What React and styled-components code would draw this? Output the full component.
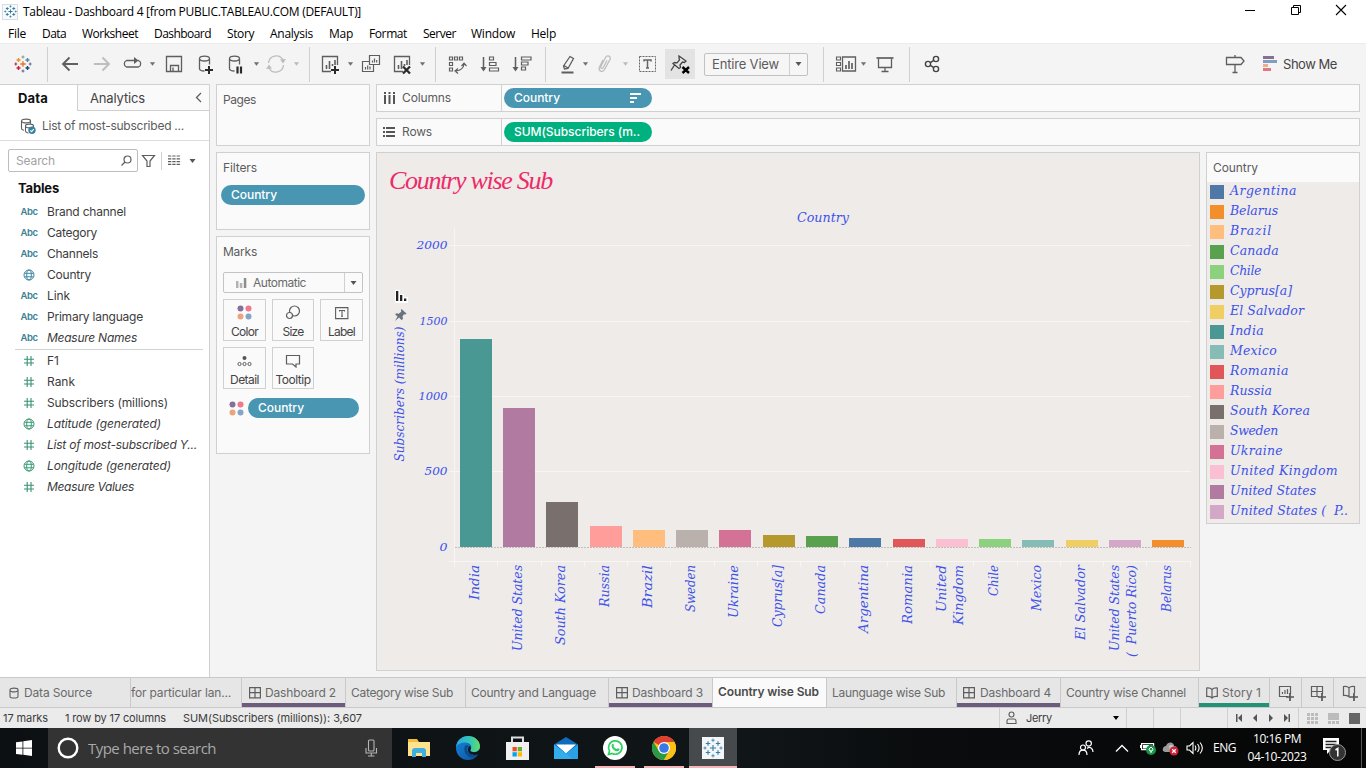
import React, { useLayoutEffect, useRef } from "react";
import styled, { createGlobalStyle, css } from "styled-components";

const UI = `"Inter", "Liberation Sans", sans-serif`;
const WIN = `"Open Sans", "Noto Sans", sans-serif`;
const SCRIPT = `"Lucida Calligraphy", "DejaVu Serif", serif`;
const TITLE = `"Liberation Serif", serif`;

const Global = createGlobalStyle`
  * { box-sizing: border-box; }
  body { margin: 0; background: #f4f4f4; font-family: ${UI}; }
  svg { display: block; flex: none; }
`;

/* ---------- text that tracks out to a given width ---------- */
const Run = styled.span`
  display: inline-block;
  white-space: pre;
  flex: none;
  font-style: ${(p) => (p.$italic ? "italic" : "inherit")};
`;
function Fit({ w, children, italic }) {
  const ref = useRef(null);
  useLayoutEffect(() => {
    const el = ref.current;
    el.style.letterSpacing = "0px";
    const natural = el.getBoundingClientRect().width;
    el.style.letterSpacing = `${(w - natural) / String(children).length}px`;
  }, [w, children]);
  return <Run ref={ref} $italic={italic}>{children}</Run>;
}

/* ---------- icons ---------- */
const Icon = ({ w = 24, h = 24, c = "#5e5e5e", sw = 1.3, children, ...rest }) => (
  <svg width={w} height={h} viewBox={`0 0 ${w} ${h}`} fill="none" stroke={c} strokeWidth={sw} {...rest}>
    {children}
  </svg>
);
const plus = (x, y, r) => `M${x - r} ${y}H${x + r}M${x} ${y - r}V${y + r}`;
const LOGO_COLORS = ["#e8762c", "#c72035", "#5b879b", "#5c6692", "#eb912c", "#1f457e", "#7199a6", "#c72035", "#5b879b"];
const LOGO_BLUE = Array(9).fill("#3a7ba0");
const TableauMark = ({ size, colors = LOGO_COLORS, sw = 1.4 }) => (
  <svg width={size} height={size} viewBox="0 0 18 18" fill="none" strokeWidth={sw}>
    <path stroke={colors[0]} d={plus(9, 9, 2.8)} />
    <path stroke={colors[4]} d={plus(4.5, 5, 2)} />
    <path stroke={colors[2]} d={plus(13.5, 5, 2)} />
    <path stroke={colors[1]} d={plus(4.5, 13, 2)} />
    <path stroke={colors[5]} d={plus(13.5, 13, 2)} />
    <g strokeWidth={sw * 0.75}>
      <path stroke={colors[6]} d={plus(9, 2, 1.5)} />
      <path stroke={colors[3]} d={plus(9, 16, 1.5)} />
      <path stroke={colors[7]} d={plus(1.8, 9, 1.4)} />
      <path stroke={colors[3]} d={plus(16.2, 9, 1.4)} />
    </g>
  </svg>
);
const Caret = ({ w = 7, c = "#707070" }) => (
  <svg width={w} height="6" viewBox="0 0 8 6"><path fill={c} d="M1 1h6L4 5z" /></svg>
);
const DARK = "#2b2b2b";
const BackIcon = () => <Icon sw={1.9} c="#606060"><path d="M20 12H5M11.500 5.500 5 12l6.500 6.500" /></Icon>;
const ForwardIcon = () => <Icon sw={1.9} c="#bdbdbd"><path d="M4 12h15M12.500 5.500 19 12l-6.500 6.500" /></Icon>;
const ReplayIcon = () => (
  <Icon><path d="M18 8.500h.5a3.500 3.500 0 0 1 0 6.500h-12a3.500 3.500 0 0 1 0-6.500h9" /><path fill="#5e5e5e" stroke="none" d="m14 5 4.500 3.500L14 12z" /></Icon>
);
const SaveIcon = () => <Icon><path d="M4.500 4.500h15v15h-15z M8.500 19v-5.500h8V19M11 19v-3.500" /></Icon>;
const Cylinder = () => <path d="M5.500 6.500v10c0 1.500 2 2.500 5 2.500M15.500 6.500v6M5.500 6.500c0-3.300 10-3.300 10 0s-10 3.300-10 0Z" />;
const DbPlusIcon = () => <Icon><Cylinder /><path stroke={DARK} strokeWidth="2" d={plus(15, 18, 4)} /></Icon>;
const DbPauseIcon = () => <Icon><Cylinder /><path stroke={DARK} strokeWidth="2.200" d="M13.500 14.500v7M17 14.500v7" /></Icon>;
const RefreshIcon = () => (
  <Icon c="#bdbdbd"><path d="M4.500 11a7.700 7.700 0 0 1 14.500-3M19.500 13A7.700 7.700 0 0 1 5 16" /><path fill="#bdbdbd" stroke="none" d="m16 7.500 6-.5-3 4.500zM8 16.500l-6 .5 3-4.500z" /></Icon>
);
const SheetIcon = ({ mark }) => (
  <Icon>
    <path d="M13 19.500H4.500v-15h15V13" /><path strokeWidth="1.600" d="M8.500 17v-4M11.500 17V9M14.500 14v-2M17 13V8" />
    {mark === "plus" && <path stroke={DARK} strokeWidth="2" d={plus(17, 18, 4)} />}
    {mark === "x" && <path stroke={DARK} strokeWidth="2.300" d="m13 14.500 7 7M20 14.500l-7 7" />}
  </Icon>
);
const DuplicateIcon = () => (
  <Icon sw={1.2}><path d="M10.500 3.500h10v9h-10zM10 9.500H3.500v10h11V13M13.500 10.500v-2M15.500 10.500v-4M17.700 10.500V8M6.500 17.500v-2.500M8.700 17.500v-4M11 17.500v-3" /></Icon>
);
const SwapIcon = () => (
  <Icon sw={1.2}><path d="M4.500 5h3v3h-3zM9.500 5h3v3h-3zM14.500 5h3v3h-3zM4.500 10.500h3v3h-3zM4.500 16h3v3h-3zM19 12c-.5 4-3 6.500-8 7M16.500 14l2.500-2.800L21.500 14M13 16.500 10 19l3 2.500" /></Icon>
);
const SortIcon = ({ asc }) => (
  <Icon sw={1.2}>
    <path strokeWidth="1.500" d="M5.500 5v13" /><path fill="#5e5e5e" stroke="none" d="M2.500 15h6l-3 4.500z" />
    <path d={asc ? "M11.500 5h4v3h-4zM11.500 10.500h6.500v3h-6.500zM11.500 16h9v3h-9z" : "M11.500 5h9.500v3h-9.500zM11.500 10h6.500v3h-6.500zM11.500 15h4v3h-4z"} />
  </Icon>
);
const HighlighterIcon = () => (
  <Icon><path d="m14 4.500 3.500 2-5.500 10-3.500.5-1-3z M8 13.500l4 2.500" /><path strokeWidth="2" d="M5.500 20.500h12" /></Icon>
);
const ClipIcon = () => (
  <Icon c="#bdbdbd"><path d="m10 8-3.500 7c-1.800 4 3 6 5 2.500l5.500-10c1.500-3.500-2.800-5-4.500-2L7.800 14.500c-.6 2 1.700 2.500 2.500 1L14 8.500" /></Icon>
);
const TextBoxIcon = () => (
  <Icon c="#666"><rect x="4.500" y="4.500" width="16" height="15" strokeDasharray="2 1" strokeWidth="1" /><path strokeWidth="1.500" d="M9 9.500V8h7v1.500M12.500 8v8M11 16h3" /></Icon>
);
const PinXIcon = () => (
  <Icon w={30} h={30} c="#444"><path d="m14 7 7 5-1.500 1.500-2-.5-2.500 3 .5 2.500-1.500 1-6-5 1.500-1 2.500.3 2.500-3-.5-2zM9.500 16 6 21.500" /><path stroke="#000" strokeWidth="2.400" d="m17.500 18 6.500 6M24 18l-6.500 6" /></Icon>
);
const CardsIcon = () => (
  <Icon><path strokeWidth="1.100" d="M2.500 5h4v3h-4zM2.500 10.500h4v3h-4zM2.500 16h4v3h-4z" /><path d="M8.500 5h13v14h-13z" /><path strokeWidth="1.700" d="M12 17v-4M15 17V9M18 17v-6" /></Icon>
);
const PresentIcon = () => <Icon><path strokeWidth="1.700" d="M3.500 6h17" /><path d="M5.500 6.500v9h13v-9M12 15.500V20M8.500 19.500h7" /></Icon>;
const ShareIcon = () => (
  <Icon c="#444" sw={1.4}><circle cx="8" cy="12" r="2.600" /><circle cx="16" cy="7" r="2.600" /><circle cx="16" cy="17" r="2.600" /><path d="m10.300 10.700 3.500-2.300M10.300 13.300l3.500 2.300" /></Icon>
);
const SignpostIcon = () => <Icon><path d="M3.500 5.500H18l3 3.500-3 3.500H3.500zM12 3v2.500M12 12.500v8M9.500 20.500h5" /></Icon>;
const ShowMeIcon = () => (
  <svg width="14" height="16"><path fill="#86708f" d="M0 0h11v3H0z" /><path fill="#7f9fc0" d="M0 4h14v3H0z" /><path fill="#ecae8d" d="M0 8h5v3H0z" /><path fill="#e27783" d="M0 12h8v3H0z" /></svg>
);
const GlobeIcon = ({ c }) => (
  <Icon w={12} h={12} c={c} sw={1}><circle cx="6" cy="6" r="5" /><ellipse cx="6" cy="6" rx="2.300" ry="5" /><path d="M1.500 4.300h9M1.500 7.800h9" /></Icon>
);
const HashIcon = () => <Icon w={12} h={12} c="#3a9273" sw={1.1}><path d="M4.200 1v10M8 1v10M1 4.200h10M1 8h10" /></Icon>;
const Dots = ({ size = 15 }) => (
  <svg width={size} height={size} viewBox="0 0 15 15"><circle cx="3.500" cy="3.500" r="3" fill="#84709a" /><circle cx="11.500" cy="3.500" r="3" fill="#f0788a" /><circle cx="3.500" cy="11.500" r="3" fill="#eca47e" /><circle cx="11.500" cy="11.500" r="3" fill="#86a4c6" /></svg>
);
const WindowIcon = () => <Icon w={12} h={12} sw={1.2}><path d="M.600.600h10.800v10.300H.600zM6 .500v10.500M.500 5.700h11" /></Icon>;
const BookIcon = () => <Icon w={12} h={12} sw={1.2}><path d="M.700 1C3 .800 5 1.300 6 2.500 7 1.300 9 .800 11.300 1v8.500C9 9.300 7 9.800 6 11 5 9.800 3 9.300.700 9.500zM6 2.500V11" /></Icon>;

/* ---------- window chrome ---------- */
const Screen = styled.div`
  width: 1366px; height: 768px; overflow: hidden;
  display: flex; flex-direction: column;
  background: #f4f4f4; color: #333; font-size: 12px; line-height: 16px;
`;
const TitleBar = styled.header`
  height: 23px; background: #fff; color: #000;
  display: flex; align-items: center; font: 12px/16px ${WIN}; padding-left: 2px; gap: 5px;
`;
const AppBadge = styled.span`
  width: 16px; height: 16px; background: #f6fafc; border: 1px solid #d7dde0;
  display: grid; place-items: center;
`;
const WindowButtons = styled.div`
  margin-left: auto; display: flex; align-items: center; gap: 33.5px; padding: 0 19px 3px 0;
`;
const MenuBar = styled.nav`
  height: 20px; background: #fff; color: #000; padding: 2px 0 0 8px;
  display: flex; align-items: center; font: 12px/16px ${WIN};
`;
const MenuItem = styled.span`width: ${(p) => p.$w}px; flex: none;`;
const Toolbar = styled.div`
  height: 41px; background: #f4f4f4; padding-left: 11px; border-top: 1px solid #ececec;
  display: flex; align-items: center;
`;
const Tool = styled.span`margin-left: ${(p) => p.$gap}px; flex: none; display: flex;`;
const PressedTool = styled(Tool)`background: #e3e3e3; height: 30px; align-items: center;`;
const CaretTool = styled(Tool)`width: 8px; justify-content: center;`;
const ToolRule = styled.i`margin-left: ${(p) => p.$gap}px; flex: none; width: 1px; height: 35px; background: #d0d0d0;`;
const ViewSelect = styled.div`
  margin-left: 9px; width: 104px; height: 23px; border: 1px solid #c2c2c2; border-radius: 2px; flex: none;
  display: flex; align-items: center; justify-content: space-between; padding-left: 7px; background: #f6f6f6;
  font-size: 13px; color: #5c5c5c;
`;
const SelectArrow = styled.span`
  width: ${(p) => p.$w}px; height: 100%; border-left: 1px solid #d0d0d0; display: grid; place-items: center;
  margin-left: ${(p) => p.$ml || 0}px;
`;
const ShowMe = styled.div`margin-left: 16px; display: flex; align-items: center; gap: 6px; font-size: 13px; color: #444;`;

const MENU = [["File", 34, 18], ["Data", 40, 24], ["Worksheet", 72, 56], ["Dashboard", 73, 57], ["Story", 43, 27], ["Analysis", 59, 43], ["Map", 40, 24], ["Format", 54, 38], ["Server", 48, 33], ["Window", 60, 44], ["Help", 40, 25]];

/* ---------- data pane ---------- */
const Body = styled.main`height: 593px; flex: none; display: flex;`;
const DataPane = styled.aside`width: 210px; background: #fff; border-right: 1px solid #d0d0d0; border-top: 1px solid #d0d0d0;`;
const PaneTabs = styled.div`height: 26px; display: flex;`;
const PaneTab = styled.div`
  display: flex; align-items: center; justify-content: space-between;
  font-size: 13px;
  ${(p) => p.$active
    ? css`width: 77px; padding-left: 18px; font-weight: 700; color: #111;`
    : css`width: 132px; padding: 0 7px 0 12px; background: #fafafa; border: solid #d0d0d0; border-width: 0 0 1px 1px; color: #444;`}
`;
const SourceRow = styled.div`
  height: 30px; border-bottom: 1px solid #dcdcdc; padding-left: 20px;
  display: flex; align-items: center; gap: 6px; color: #5c5c5c;
`;
const SearchRow = styled.div`margin: 8px 0 0 8px; display: flex; align-items: center; height: 23px;`;
const SearchBox = styled.div`
  width: 130px; height: 23px; border: 1px solid #bdbdbd; border-radius: 2px; padding: 0 5px 0 7px;
  display: flex; align-items: center; justify-content: space-between; color: #a2a2a2; margin-right: 3px;
`;
const Rule = styled.i`width: 1px; height: 18px; background: #d0d0d0; margin: 0 6px 0 5px;`;
const TablesTitle = styled.h2`margin: 6px 0 0 18px; font-size: 13px; line-height: 20px; color: #111; height: 23px;`;
const FieldRow = styled.div`height: 21px; display: flex; align-items: center; color: #3c3c3c; font-style: ${(p) => (p.$italic ? "italic" : "normal")};`;
const FieldIcon = styled.span`
  width: 47px; padding-left: 11px; display: grid; place-items: center; font-size: 9.5px; font-weight: 600; font-style: normal; color: #3d7f96;
`;
const FieldDivider = styled.hr`margin: 1px 6px 0 15px; border: 0; height: 1px; background: #d0d4d4;`;
const DIMENSIONS = [["abc", "Brand channel", 79], ["abc", "Category", 50], ["abc", "Channels", 51], ["geo", "Country", 44], ["abc", "Link", 23], ["abc", "Primary language", 96], ["abc", "Measure Names", 90, true]];
const MEASURES = [["num", "F1", 12], ["num", "Rank", 28], ["num", "Subscribers (millions)", 121], ["geo", "Latitude (generated)", 114, true], ["num", "List of most-subscribed Y...", 150, true], ["geo", "Longitude (generated)", 124, true], ["num", "Measure Values", 87, true]];
const Field = ({ kind, label, w, italic, measure }) => (
  <FieldRow $italic={italic}>
    <FieldIcon>
      {kind === "abc" && <Fit w={17}>Abc</Fit>}
      {kind === "geo" && <GlobeIcon c={measure ? "#3a9b76" : "#3f87a3"} />}
      {kind === "num" && <HashIcon />}
    </FieldIcon>
    <Fit w={w} italic={italic}>{label}</Fit>
  </FieldRow>
);

/* ---------- cards ---------- */
const CardColumn = styled.section`width: 154px; margin-left: 6px; display: flex; flex-direction: column; gap: 6px;`;
const Card = styled.div`height: ${(p) => p.$h}px; flex: none; border: 1px solid #d0d0d0; background: #fafafa;`;
const CardTitle = styled.div`padding: 7px 0 0 6px; height: ${(p) => p.$h || 32}px; color: #5c5c5c;`;
const Pill = styled.div`
  width: ${(p) => p.$w}px; height: 20px; border-radius: 10px; background: ${(p) => (p.$green ? "#00b180" : "#4996b2")};
  color: #fff; padding: 0 11px 0 10px; display: flex; align-items: center; justify-content: space-between;
  font-weight: 500; margin-left: ${(p) => p.$ml || 0}px; flex: none;
`;
const MarkSelect = styled.div`
  margin-left: 6px; width: 140px; height: 21px; border: 1px solid #c4c4c4; border-radius: 2px;
  display: flex; align-items: center; color: #6a6a6a; padding-left: 12px;
`;
const MarkGrid = styled.div`
  margin: 6px 0 0 6px; display: grid; grid-template-columns: 43px 42px 43px; grid-auto-rows: 42px; gap: 6px;
`;
const MarkButton = styled.div`
  border: 1px solid #d0d0d0; display: flex; flex-direction: column; align-items: center; justify-content: space-between;
  padding: 5px 0 0; color: #444;
`;
const MarkPillRow = styled.div`margin: 9px 0 0 12px; display: flex; align-items: center; gap: 4px;`;

/* ---------- shelves, view, legend ---------- */
const Work = styled.section`width: 984px; margin-left: 6px; display: flex; flex-direction: column; gap: 6px;`;
const Shelf = styled.div`height: 28px; border: 1px solid #d0d0d0; background: #fafafa; display: flex; align-items: center; flex: none;`;
const ShelfName = styled.div`
  width: 125px; height: 100%; border-right: 1px solid #d0d0d0; padding-left: 6px;
  display: flex; align-items: center; gap: 6px; color: #5c5c5c; margin-right: 2px;
`;
const ViewRow = styled.div`display: flex; align-items: flex-start; gap: 6px;`;
const View = styled.div`width: 824px; height: 519px; border: 1px solid #d0d0d0; background: #eeebe8;`;
const SheetTitle = styled.h1`
  margin: 0; height: 52px; padding: 11px 0 0 12px; font: italic 400 26px/34px ${TITLE}; color: #ee2a68;
`;
const Legend = styled.div`width: 154px; height: 372px; border: 1px solid #d0d0d0; background: #eeebe8; color: #3d52ea;`;
const LegendHead = styled.div`height: 29px; background: #fafafa; padding: 7px 0 0 6px; color: #5c5c5c;`;
const LegendRow = styled.div`
  height: 20px; display: flex; align-items: center; gap: 6px; padding-left: 3px; font: italic 12.5px/16px ${SCRIPT};
`;
const LegendLabel = styled.span`padding-bottom: 2px; display: flex;`;
const Swatch = styled.i`width: 14px; height: 14px; background: ${(p) => p.$c}; flex: none;`;

const COLORS = {
  Argentina: "#4e79a7", Belarus: "#f28e2b", Brazil: "#ffbe7d", Canada: "#59a14f", Chile: "#8cd17d", "Cyprus[a]": "#b6992d",
  "El Salvador": "#f1ce63", India: "#499894", Mexico: "#86bcb6", Romania: "#e15759", Russia: "#ff9d9a", "South Korea": "#79706e",
  Sweden: "#bab0ac", Ukraine: "#d37295", "United Kingdom": "#fabfd2", "United States": "#b07aa1", "United States (  P..": "#d4a6c8",
};
const LEGEND_WIDTHS = [67, 48, 42, 49, 31, 62, 74, 34, 47, 59, 42, 80, 48, 53, 108, 86, 118];
const BARS = [
  ["India", 339, [["India", 35]]], ["United States", 408, [["United States", 86]]], ["South Korea", 502, [["South Korea", 80]]],
  ["Russia", 526, [["Russia", 42]]], ["Brazil", 530, [["Brazil", 43]]], ["Sweden", 530, [["Sweden", 47]]],
  ["Ukraine", 530, [["Ukraine", 53]]], ["Cyprus[a]", 535, [["Cyprus[a]", 62]]], ["Canada", 536, [["Canada", 49]]],
  ["Argentina", 538, [["Argentina", 68]]], ["Romania", 539, [["Romania", 59]]], ["United Kingdom", 539, [["United", 47], ["Kingdom", 60]]],
  ["Chile", 539, [["Chile", 31]]], ["Mexico", 540, [["Mexico", 46]]], ["El Salvador", 540, [["El Salvador", 75]]],
  ["United States (  P..", 540, [["United States", 86], ["(  Puerto Rico)", 92]]], ["Belarus", 540, [["Belarus", 47]]],
];
const AXIS = [[2000, 245.5, 31], [1500, 321.5, 28], [1000, 396.5, 29], [500, 471.5, 23], [0, 547.5, 8]];
const PlotSvg = styled.svg`
  text { font: italic 12.5px ${SCRIPT}; fill: #3d52ea; white-space: pre; }
`;
const barX = (i) => Math.floor(460.3 + i * 43.27);

const Plot = () => (
  <PlotSvg width="822" height="465" viewBox="377 205 822 465">
    <text x="797" y="222" textLength="52" lengthAdjust="spacingAndGlyphs">Country</text>
    <g stroke="#f8f6f5">
      {AXIS.slice(0, 4).map(([v, y]) => <path key={v} d={`M449 ${y}H1191`} />)}
      <path d="M454.500 228V567M449 561.500H1191" />
      {BARS.map((b, i) => <path key={i} d={`M${Math.round(454 + (i + 1) * 43.28) + 0.5} 562v5`} />)}
    </g>
    <path stroke="#c2bebb" strokeDasharray="2 1" d="M455 547.500H1191" />
    {AXIS.map(([v, y, w]) => (
      <text key={v} x={447.5 - w} y={y + 3.5} textLength={w} lengthAdjust="spacingAndGlyphs" style={{ fontSize: 10.5 }}>{v}</text>
    ))}
    <text transform="translate(404 461.500) rotate(-90)" textLength="135" lengthAdjust="spacingAndGlyphs">Subscribers (millions)</text>
    <path fill="#fff" d="M395 290h5v4h4v3h4v6h-13z" />
    <path fill="#222" d="M396 291h2.300v10H396zM400 295h2.300v6H400zM404 298.500h2.300v2.500H404z" />
    <path fill="#69737d" d="m401.500 309 5 4.500-1 1-1.500-.3-1.500 2.300.5 2.500-1.500 1-2.500-2.500-4 3.500 2.500-4.500-2.300-2 1-1.200 2.500.4 2.500-2-.3-1.700z" />
    {BARS.map(([name, top, lines], i) => {
      const x = barX(i);
      return (
        <g key={name}>
          <rect x={x} y={top} width="32" height={547 - top} fill={COLORS[name]} />
          {lines.map(([t, len], k) => (
            <text key={k} transform={`translate(${x + 18.8 + (lines.length > 1 ? k * 17 - 8.5 : 0)} ${565 + len}) rotate(-90)`} textLength={len} lengthAdjust="spacingAndGlyphs">{t}</text>
          ))}
        </g>
      );
    })}
  </PlotSvg>
);

/* ---------- sheet tabs & status ---------- */
const SheetTabs = styled.nav`
  height: 31px; flex: none; display: flex; background: #e6e6e6; border: solid #c9c9c9; border-width: 1px 0; color: #6a6a6a;
`;
const SheetTab = styled.div`
  width: ${(p) => p.$w}px; flex: none; padding-left: ${(p) => p.$pl}px; border-right: 1px solid #c9c9c9;
  display: flex; align-items: center; gap: ${(p) => p.$gap || 5}px; overflow: hidden;
  ${(p) => p.$bar && css`box-shadow: inset 0 -4px ${p.$bar};`}
  ${(p) => p.$active && css`background: #fafafa; font-weight: 600; color: #4a4a4a; padding-bottom: 2px;`}
`;
const StatusBar = styled.footer`
  height: 20px; flex: none; background: #ebebeb; display: flex; align-items: center; font-size: 11px; color: #3c3c3c; padding-left: 3px;
`;
const StatusCell = styled.div`
  width: ${(p) => p.$w}px; height: 20px; border-left: 1px solid #cfcfcf; display: flex; align-items: center; flex: none;
  padding-left: ${(p) => p.$pl || 0}px; gap: ${(p) => p.$gap || 0}px;
`;
const StatusText = styled.span`width: ${(p) => p.$w}px; flex: none;`;

/* ---------- taskbar ---------- */
const Taskbar = styled.footer`
  height: 40px; flex: none; background: linear-gradient(90deg, #0c1013 0, #101518 55%, #0a0c0d 68%, #060606 100%);
  display: flex; color: #fff; font: 12px/18px ${WIN};
`;
const Start = styled.div`width: 48px; display: grid; place-items: center;`;
const TaskSearch = styled.div`
  width: 344px; background: #333; display: flex; align-items: center; padding-left: 9px; gap: 9px; font-size: 15px; color: #a9a9a9;
`;
const Mic = styled.span`margin-left: auto; padding-right: 14px;`;
const TaskApps = styled.div`display: flex; padding-left: 3px; gap: 1px;`;
const TaskApp = styled.div`
  width: 48px; height: 40px; display: grid; place-items: center;
  ${(p) => p.$open && css`background: linear-gradient(#f7b3b6, #f7b3b6) bottom / 40px 2px no-repeat;`}
  ${(p) => p.$current && css`background: linear-gradient(#f7b3b6, #f7b3b6) bottom / 48px 2px no-repeat, #464a4c;`}
`;
const LogoTile = styled.span`width: 22px; height: 22px; background: #f3f6f8; display: grid; place-items: center;`;
const Tray = styled.div`margin-left: auto; display: flex; align-items: center;`;
const TrayItem = styled.span`width: ${(p) => p.$w}px; flex: none; display: grid; justify-items: ${(p) => p.$align || "center"};`;
const ShowDesktop = styled.i`width: 5px; height: 40px; border-left: 1px solid #555;`;

const FolderIcon = () => (
  <svg width="22" height="20"><path fill="#f3bd3f" d="M0 1h9l2 3h10v14H0z" /><path fill="#fde38d" d="M0 4h22v14H0z" /><path fill="#40aee0" d="M4 19v-6q0-3 3-3h8q3 0 3 3v6h-4v-4H8v4z" /></svg>
);
const EdgeIcon = () => (
  <svg width="24" height="24" viewBox="0 0 24 24">
    <defs>
      <linearGradient id="eg" x1="0" x2="1"><stop stopColor="#2ca6e2" /><stop offset=".6" stopColor="#34c7b4" /><stop offset="1" stopColor="#67db62" /></linearGradient>
      <linearGradient id="eb" y1="0" y2="1"><stop stopColor="#1586dc" /><stop offset="1" stopColor="#0b52a0" /></linearGradient>
    </defs>
    <circle cx="12" cy="12" r="12" fill="url(#eb)" />
    <path fill="url(#eg)" d="M0 11C1 4 6 0 12 0c7 0 12 5 12 10 0 4-3 6-6.500 6-3 0-4-1.500-3-2.700C17 9.500 13.500 6.500 9 6.500 5 6.500 1.500 8 0 11z" />
    <path fill="#0e4a86" d="M9 10c-2 5 1 11 8 12 2-.6 4-2.500 5-4.500-5 3-11 0-11-4 0-1.700.8-3 2-3.700-1.500-1-3.200-.8-4 .2z" />
    <path fill="#101518" d="M13.500 10c1.500 1 1.800 2.500 1 3.500-1 1.500.8 3 4 2.800 2.500 0 4.500-1.500 5.500-3.300l.5 3.500-2 1.800c-4 1.500-10 .5-10.500-4.300 0-1.500.6-3 1.500-4z" />
  </svg>
);
const StoreIcon = () => (
  <svg width="24" height="24"><path fill="none" stroke="#dedede" strokeWidth="2" d="M7 8V1.500h11V8" /><path fill="#f0f0f0" d="M1 6h23v18H1z" /><path fill="#f25022" d="M7.500 11h4.300v4.300H7.500z" /><path fill="#6bb12d" d="M12.700 11H17v4.300h-4.300z" /><path fill="#00a4ef" d="M7.500 16.200h4.300v4.300H7.500z" /><path fill="#ffb900" d="M12.700 16.200H17v4.300h-4.300z" /></svg>
);
const MailIcon = () => (
  <svg width="24" height="24"><path fill="#0f6cbd" d="m12 1 12 7.500V23H0V8.500z" /><path fill="#fff" d="M2 8.500h20l-10 9z" /><path fill="#2aa0e5" d="m0 8.500 12 9 12-9V23H0z" /><path fill="#37b5f2" d="M0 8.500 19 23H0z" opacity=".65" /></svg>
);
const WhatsAppIcon = () => (
  <svg width="24" height="24"><circle cx="12" cy="12" r="12" fill="#fff" /><path fill="none" stroke="#2bd162" strokeWidth="1.700" d="m5.500 18.500 1-3.600a6.700 6.700 0 1 1 2.600 2.500z" /><path fill="#2bd162" d="M9 8.500c.7-1 1.400-.8 1.800.3.500 1.200-.6 1.200-.2 1.800.8 1.300 1.600 2 2.800 2.500.6.200.9-1.100 1.600-.8l1.500.8c.4 1.500-1.400 2.500-2.800 2.200C10.500 14.500 7.500 11 9 8.500z" /></svg>
);
const ChromeIcon = () => (
  <svg width="24" height="24" viewBox="0 0 24 24"><circle cx="12" cy="12" r="12" fill="#fbc116" /><path fill="#df3e30" d="M12 12 1.600 6A12 12 0 0 1 22.400 6z" /><path fill="#2b9a47" d="M1.600 6A12 12 0 0 0 12 24l5.200-9L12 12 6.800 15z" /><path fill="#fbc116" d="M12 6h10.400A12 12 0 0 1 12 24l5.200-9z" /><circle cx="12" cy="12" r="6" fill="#fff" /><circle cx="12" cy="12" r="4.800" fill="#3b78e7" /></svg>
);
const PersonIcon = () => <Icon w={11} h={14} sw={1.1}><circle cx="5.500" cy="3.500" r="2.500" /><path d="M1 12.500V10q0-2 2-2h5q2 0 2 2v2.500z" /></Icon>;
const NewTabIcon = ({ kind }) => (
  <Icon w={16} h={16} sw={1.2}>
    {kind === "sheet" && <path d="M10 11.500H1.500v-10h11V9M4.500 9V7M7 9V5M9.500 9V4" />}
    {kind === "dash" && <path d="M9 11.500H1.500v-10h11V9M7 1.500v10M1.500 6.500h11" />}
    {kind === "story" && <path d="M8 12.500C6 10.500 4 10 1.500 10.500v-9C4 1.200 6 1.500 7 3c1-1.500 3-1.800 5.500-1.500V8M7 3v9" />}
    <path stroke="#555" strokeWidth="1.700" d={plus(12, 12, 4)} />
  </Icon>
);

const PURPLE = "#6d5b7e";
const TABS = [
  { w: 131, pl: 9, label: "Data Source", tw: 68, icon: <Icon w={10} h={12} sw={1.1}><path d="M1 3v6.500c0 2 8 2 8 0V3M1 3c0-2.500 8-2.500 8 0S1 5.500 1 3z" /></Icon> },
  { w: 111, pl: 0, label: "for particular lan...", tw: 100 },
  { w: 104, pl: 7, gap: 4, label: "Dashboard 2", tw: 71, icon: <WindowIcon />, bar: PURPLE },
  { w: 120, pl: 5, label: "Category wise Sub", tw: 102 },
  { w: 143, pl: 5, label: "Country and Language", tw: 125 },
  { w: 104, pl: 7, gap: 4, label: "Dashboard 3", tw: 71, icon: <WindowIcon />, bar: PURPLE },
  { w: 114, pl: 5, label: "Country wise Sub", tw: 101, active: true },
  { w: 130, pl: 5, label: "Launguage wise Sub", tw: 113 },
  { w: 104, pl: 6, label: "Dashboard 4", tw: 71, icon: <WindowIcon />, bar: PURPLE },
  { w: 138, pl: 5, label: "Country wise Channel", tw: 120 },
  { w: 71, pl: 7, gap: 4, label: "Story 1", tw: 39, icon: <BookIcon />, bar: "#249179" },
];

export default function App() {
  return (
    <Screen>
      <Global />
      <TitleBar>
        <AppBadge><TableauMark size={13} colors={LOGO_BLUE} /></AppBadge>
        <Fit w={338}>Tableau - Dashboard 4 [from PUBLIC.TABLEAU.COM (DEFAULT)]</Fit>
        <WindowButtons>
          <Icon w={12} h={12} c="#000" sw={1}><path d="M1 6.500h10" /></Icon>
          <Icon w={12} h={12} c="#000" sw={1}><path d="M1.500 3.500h7v7h-7zM3.500 3.500v-2h7v7h-2" /></Icon>
          <Icon w={12} h={12} c="#000" sw={1.1}><path d="m1 1 10 10M11 1 1 11" /></Icon>
        </WindowButtons>
      </TitleBar>
      <MenuBar>
        {MENU.map(([t, w, tw]) => <MenuItem key={t} $w={w}><Fit w={tw}>{t}</Fit></MenuItem>)}
      </MenuBar>
      <Toolbar>
        <Tool $gap={3}><TableauMark size={18} /></Tool>
        <ToolRule $gap={15} />
        <Tool $gap={10}><BackIcon /></Tool>
        <Tool $gap={8}><ForwardIcon /></Tool>
        <Tool $gap={6}><ReplayIcon /></Tool>
        <CaretTool $gap={4}><Caret /></CaretTool>
        <Tool $gap={6}><SaveIcon /></Tool>
        <Tool $gap={8}><DbPlusIcon /></Tool>
        <Tool $gap={6}><DbPauseIcon /></Tool>
        <CaretTool $gap={4}><Caret /></CaretTool>
        <Tool $gap={4}><RefreshIcon /></Tool>
        <CaretTool $gap={4}><Caret c="#bbb" /></CaretTool>
        <ToolRule $gap={9} />
        <Tool $gap={8}><SheetIcon mark="plus" /></Tool>
        <CaretTool $gap={4}><Caret /></CaretTool>
        <Tool $gap={5}><DuplicateIcon /></Tool>
        <Tool $gap={7}><SheetIcon mark="x" /></Tool>
        <CaretTool $gap={4}><Caret /></CaretTool>
        <ToolRule $gap={9} />
        <Tool $gap={9}><SwapIcon /></Tool>
        <Tool $gap={9}><SortIcon asc /></Tool>
        <Tool $gap={8}><SortIcon /></Tool>
        <ToolRule $gap={11} />
        <Tool $gap={10}><HighlighterIcon /></Tool>
        <CaretTool $gap={1}><Caret /></CaretTool>
        <Tool $gap={4}><ClipIcon /></Tool>
        <CaretTool $gap={4}><Caret c="#bbb" /></CaretTool>
        <Tool $gap={6}><TextBoxIcon /></Tool>
        <PressedTool $gap={6}><PinXIcon /></PressedTool>
        <ViewSelect><Fit w={67}>Entire View</Fit><SelectArrow $w={18}><Caret w={9} c="#555" /></SelectArrow></ViewSelect>
        <ToolRule $gap={15} />
        <Tool $gap={10}><CardsIcon /></Tool>
        <CaretTool $gap={1}><Caret /></CaretTool>
        <Tool $gap={6}><PresentIcon /></Tool>
        <ToolRule $gap={12} />
        <Tool $gap={10}><ShareIcon /></Tool>
        <Tool $gap={279}><SignpostIcon /></Tool>
        <ShowMe><ShowMeIcon /><Fit w={54}>Show Me</Fit></ShowMe>
      </Toolbar>

      <Body>
        <DataPane>
          <PaneTabs>
            <PaneTab $active><Fit w={30}>Data</Fit></PaneTab>
            <PaneTab><Fit w={55}>Analytics</Fit><Icon w={7} h={11}><path d="M6 1 1.500 5.500 6 10" /></Icon></PaneTab>
          </PaneTabs>
          <SourceRow>
            <Icon w={16} h={16} sw={1.1}><path d="M1.500 3v7.500c0 1 1 1.500 2.500 1.700M1.500 3c0-2.500 9-2.500 9 0s-9 2.500-9 0zM5.500 8v5c0 1 1.500 2 3 2M5.500 8c0-2.500 8-2.500 8 0s-8 2.500-8 0zM10.500 3v2.500M13.500 8v1" /><circle cx="12" cy="12.300" r="3.700" fill="#3a80a0" stroke="none" /><path stroke="#fff" d="m10.300 12.300 1.300 1.400 2.200-2.500" /></Icon>
            <Fit w={142}>List of most-subscribed ...</Fit>
          </SourceRow>
          <SearchRow>
            <SearchBox>
              <Fit w={39}>Search</Fit>
              <Icon w={11} h={11} sw={1.2}><circle cx="6.500" cy="4.500" r="3.500" /><path d="m4 7-3.500 3.500" /></Icon>
            </SearchBox>
            <Icon w={15} h={14} sw={1.2}><path d="M1.500 1.500h12L9 7v5.500H6V7z" /></Icon>
            <Rule />
            <Icon w={13} h={11} sw={1.2}><path strokeDasharray="3.300 1" d="M0 1h13M0 3.800h13M0 6.600h13M0 9.400h13" /></Icon>
            <Tool $gap={7}><Caret w={9} c="#555" /></Tool>
          </SearchRow>
          <TablesTitle><Fit w={41}>Tables</Fit></TablesTitle>
          {DIMENSIONS.map(([k, l, w, i]) => <Field key={l} kind={k} label={l} w={w} italic={i} />)}
          <FieldDivider />
          {MEASURES.map(([k, l, w, i]) => <Field key={l} kind={k} label={l} w={w} italic={i} measure />)}
        </DataPane>

        <CardColumn>
          <Card $h={62}><CardTitle><Fit w={33}>Pages</Fit></CardTitle></Card>
          <Card $h={78}><CardTitle><Fit w={34}>Filters</Fit></CardTitle><Pill $w={144} $ml={4}><Fit w={46}>Country</Fit></Pill></Card>
          <Card $h={218}>
            <CardTitle $h={35}><Fit w={34}>Marks</Fit></CardTitle>
            <MarkSelect>
              <svg width="11" height="10"><path fill="#b3b3b3" d="M0 3h2.500v7H0zM3.800 5h2.500v5H3.800z" /><path fill="#8d8d8d" d="M7.800 0h2.500v10H7.800z" /></svg>
              <Tool $gap={6}><Fit w={53}>Automatic</Fit></Tool>
              <SelectArrow $w={18} $ml={38}><Caret w={9} c="#555" /></SelectArrow>
            </MarkSelect>
            <MarkGrid>
              <MarkButton><Dots /><Fit w={27}>Color</Fit></MarkButton>
              <MarkButton><Icon w={16} h={15} sw={1.200}><circle cx="9.500" cy="6" r="5" /><circle cx="4.500" cy="10.500" r="3" fill="#fafafa" /></Icon><Fit w={21}>Size</Fit></MarkButton>
              <MarkButton><Icon w={14} h={15} sw={1.100}><path d="M.600 2.600h12.300v11H.600zM4.500 6.500V5.500h5v1M7 5.500v6M6 11.300h2" /></Icon><Fit w={27}>Label</Fit></MarkButton>
              <MarkButton><Icon w={15} h={15} sw={1}><circle cx="7.500" cy="5" r="2" fill="#555" stroke="none" /><circle cx="2.500" cy="11" r="1.600" /><circle cx="7.500" cy="11" r="1.600" /><circle cx="12.500" cy="11" r="1.600" /></Icon><Fit w={29}>Detail</Fit></MarkButton>
              <MarkButton><Icon w={16} h={15} sw={1.200}><path d="M1.500 2.500h13v8.500h-3.500v3L7.500 11h-6z" /></Icon><Fit w={35}>Tooltip</Fit></MarkButton>
            </MarkGrid>
            <MarkPillRow><Dots /><Pill $w={111}><Fit w={46}>Country</Fit></Pill></MarkPillRow>
          </Card>
        </CardColumn>

        <Work>
          <Shelf>
            <ShelfName>
              <svg width="13" height="12" fill="#555"><path d="M1 0h2v2H1zM5.500 0h2v2h-2zM10 0h2v2h-2zM1 3h2v9H1zM5.500 3h2v9h-2zM10 3h2v9h-2z" /></svg>
              <Fit w={49}>Columns</Fit>
            </ShelfName>
            <Pill $w={148}><Fit w={46}>Country</Fit><svg width="11" height="10" fill="#fff"><path d="M0 0h11v2H0zM0 4h7v2H0zM0 8h4v2H0z" /></svg></Pill>
          </Shelf>
          <Shelf>
            <ShelfName>
              <svg width="13" height="10" fill="#555"><path d="M0 0h2v2H0zM0 4h2v2H0zM0 8h2v2H0zM3 0h9v2H3zM3 4h9v2H3zM3 8h9v2H3z" /></svg>
              <Fit w={30}>Rows</Fit>
            </ShelfName>
            <Pill $w={148} $green><Fit w={126}>SUM(Subscribers (m..</Fit></Pill>
          </Shelf>
          <ViewRow>
            <View>
              <SheetTitle><Fit w={163}>Country wise Sub</Fit></SheetTitle>
              <Plot />
            </View>
            <Legend>
              <LegendHead><Fit w={45}>Country</Fit></LegendHead>
              {Object.entries(COLORS).map(([name, c], i) => (
                <LegendRow key={name}><Swatch $c={c} /><LegendLabel><Fit w={LEGEND_WIDTHS[i]}>{name}</Fit></LegendLabel></LegendRow>
              ))}
            </Legend>
          </ViewRow>
        </Work>
      </Body>

      <SheetTabs>
        {TABS.map((t) => (
          <SheetTab key={t.label} $w={t.w} $pl={t.pl} $gap={t.gap} $bar={t.bar} $active={t.active}>{t.icon}<Fit w={t.tw}>{t.label}</Fit></SheetTab>
        ))}
        <SheetTab $w={32} $pl={8}><NewTabIcon kind="sheet" /></SheetTab>
        <SheetTab $w={32} $pl={8}><NewTabIcon kind="dash" /></SheetTab>
        <SheetTab $w={33} $pl={8}><NewTabIcon kind="story" /></SheetTab>
      </SheetTabs>
      <StatusBar>
        <StatusText $w={62}><Fit w={45}>17 marks</Fit></StatusText>
        <StatusText $w={118}><Fit w={101}>1 row by 17 columns</Fit></StatusText>
        <StatusText $w={816}><Fit w={179}>SUM(Subscribers (millions)): 3,607</Fit></StatusText>
        <StatusCell $w={127} $pl={6} $gap={9}><PersonIcon /><Fit w={26}>Jerry</Fit><Tool $gap={50}><Caret w={10} c="#000" /></Tool></StatusCell>
        <StatusCell $w={27} /><StatusCell $w={27} /><StatusCell $w={47} />
        <StatusCell $w={71} $pl={7}>
          <svg width="58" height="8" fill="#555"><path d="M1 0h1.500v8H1zM7 0v8L3 4zM22 0v8l-4-4zM34 0v8l4-4zM49 0v8l4-4zM53.500 0H55v8h-1.500z" /></svg>
        </StatusCell>
        <StatusCell $w={67} $pl={8} $gap={10}>
          <svg width="11" height="11" fill="#bcbcbc"><path d="M0 0h3v3H0zM4 0h3v3H4zM8 0h3v3H8zM0 4h3v3H0zM4 4h3v3H4zM8 4h3v3H8zM0 8h3v3H0zM4 8h3v3H4zM8 8h3v3H8z" /></svg>
          <svg width="11" height="11" fill="#bcbcbc"><path d="M0 0h11v7H0zM0 8h3v3H0zM4 8h3v3H4zM8 8h3v3H8z" /></svg>
          <svg width="11" height="11"><path fill="#666" d="M0 0h11v11H0z" /></svg>
        </StatusCell>
      </StatusBar>

      <Taskbar>
        <Start><svg width="16" height="16" fill="#fff"><path d="M0 2.300 6.500 1.400v6.300H0zM7.300 1.300 16 0v7.700H7.300zM0 8.500h6.500v6.300L0 13.900zM7.300 8.500H16V16l-8.700-1.200z" /></svg></Start>
        <TaskSearch>
          <Icon w={22} h={22} c="#fff" sw={2.400}><circle cx="11" cy="11" r="9.300" /></Icon>
          <Fit w={128}>Type here to search</Fit>
          <Mic><Icon w={13} h={18} c="#b5b5b5" sw={1.100}><rect x="3.500" y="1" width="5.500" height="11" rx="1" /><path d="M1 9v5h10.500V9M6.300 14v3M3 17h6.500" /></Icon></Mic>
        </TaskSearch>
        <TaskApps>
          <TaskApp><FolderIcon /></TaskApp>
          <TaskApp><EdgeIcon /></TaskApp>
          <TaskApp><StoreIcon /></TaskApp>
          <TaskApp><MailIcon /></TaskApp>
          <TaskApp $open><WhatsAppIcon /></TaskApp>
          <TaskApp $open><ChromeIcon /></TaskApp>
          <TaskApp $current><LogoTile><TableauMark size={20} colors={LOGO_BLUE} sw={1} /></LogoTile></TaskApp>
        </TaskApps>
        <Tray>
          <TrayItem $w={38}><Icon w={16} h={16} c="#fff" sw={1.2}><circle cx="5" cy="7.500" r="2.500" /><path d="M1 15c0-6.500 8-6.500 8 0" /><circle cx="10.700" cy="3.500" r="2.700" /><path d="M9 8.500c3-2.500 6 0 6 3.500" /></Icon></TrayItem>
          <TrayItem $w={33}><Icon w={14} h={9} c="#fff"><path d="m1 7.500 6-6 6 6" /></Icon></TrayItem>
          <TrayItem $w={19}><svg width="16" height="14"><path fill="none" stroke="#fff" strokeWidth="1.200" d="M1.600 2.600h12v6h-12z" /><path fill="#fff" d="M3 4h6v3.500H3zM0 4h1v3H0z" /><circle cx="11" cy="9" r="5" fill="#17964a" /><path fill="none" stroke="#fff" d="M11 12V9M9 8c0 3 4 3 4 0l-2-2z" /></svg></TrayItem>
          <TrayItem $w={27}><svg width="18" height="15"><path fill="#9b9b9b" d="M1 10c-1-4 2-5 3-5C6 0 12 1 12 5c4 0 4 5 2 6H3z" /><path fill="#c9c9c9" d="M7 5c2-2 5-1 5 1 3 0 3 4 2 5H8z" /><circle cx="12" cy="10" r="4.500" fill="#d02035" /><path stroke="#fff" strokeWidth="1.300" d="m10.200 8.200 3.600 3.600M13.800 8.200l-3.600 3.600" /></svg></TrayItem>
          <TrayItem $w={21}><Icon w={17} h={14} c="#fff" sw={1.1}><path d="M1 5h2.500L7 1.500v11L3.500 9H1zM9 4.500c1 1.500 1 3.500 0 5M11.500 3c2 2.500 2 5.500 0 8M14 1.500c3 3.500 3 7.500 0 11" /></Icon></TrayItem>
          <TrayItem $w={42} $align="start"><Tool $gap={8}><Fit w={23}>ENG</Fit></Tool></TrayItem>
          <TrayItem $w={60}><Fit w={48}>10:16 PM</Fit><Fit w={59}>04-10-2023</Fit></TrayItem>
          <TrayItem $w={54}>
            <svg width="26" height="26"><path fill="#fff" d="M2 3h16v12h-8l-4 4v-4H2z" /><path stroke="#222" strokeWidth="1.300" d="M4.500 6.500h11M4.500 9.500h11M4.500 12.500h7" /><circle cx="16.500" cy="17.500" r="8" fill="#333" stroke="#999" /><path fill="none" stroke="#fff" strokeWidth="1.500" d="m14.500 15 2.300-1.500v8" /></svg>
          </TrayItem>
          <ShowDesktop />
        </Tray>
      </Taskbar>
    </Screen>
  );
}
